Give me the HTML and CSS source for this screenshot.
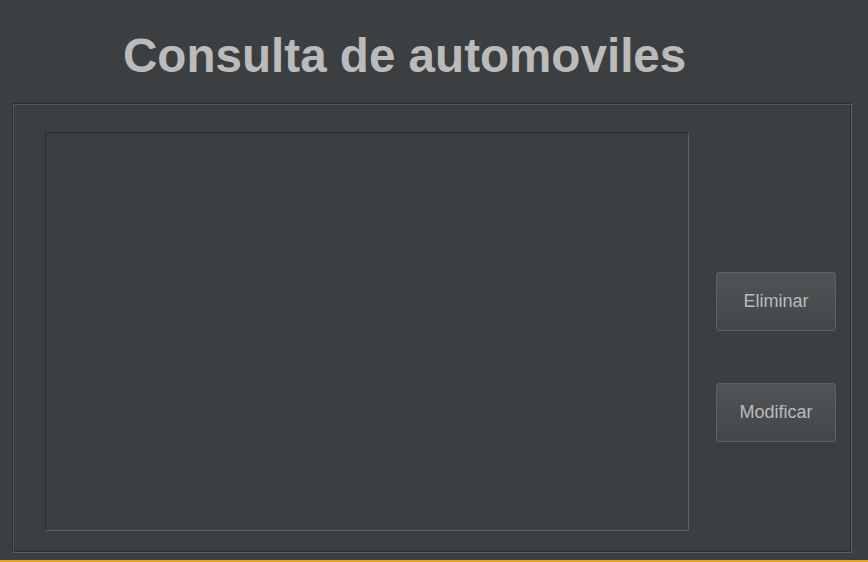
FILE: index.html
```html
<!DOCTYPE html>
<html lang="es">
<head>
<meta charset="utf-8">
<title>Consulta de automoviles</title>
<link rel="stylesheet" href="styles.css">
</head>
<body>
<div class="window">
  <header class="header">
    <h1 class="title">Consulta de automoviles</h1>
  </header>
  <section class="panel">
    <div class="list"></div>
    <div class="actions">
      <button class="btn" type="button">Eliminar</button>
      <button class="btn" type="button">Modificar</button>
    </div>
  </section>
  <div class="spacer"></div>
  <div class="accent"></div>
</div>
</body>
</html>
```
FILE: styles.css
```css
html, body {
  margin: 0;
  padding: 0;
  background: #3c3f41;
}
.window {
  width: 868px;
  height: 562px;
  display: flex;
  flex-direction: column;
  background: #3c3f41;
  font-family: "Liberation Sans", Arial, sans-serif;
}
.header {
  height: 103px;
  box-sizing: border-box;
  padding: 28px 0 0 123px;
}
.title {
  margin: 0;
  font-size: 47.6px;
  font-weight: bold;
  color: #bbbbbb;
  line-height: 55px;
  letter-spacing: 0;
}
.panel {
  margin: 0 16px 0 12px;
  height: 450px;
  box-sizing: border-box;
  border: 1px solid;
  border-color: #2b2d2e #5d6062 #5d6062 #2b2d2e;
  box-shadow: inset 1px 1px 0 #55585a, inset -1px -1px 0 #2b2d2e;
  padding: 28px 15px 0 32px;
  display: flex;
  align-items: flex-start;
}
.list {
  width: 644px;
  height: 399px;
  box-sizing: border-box;
  border: 1px solid;
  border-color: #2b2d2e #5d6062 #5d6062 #2b2d2e;
  background: #3b3e40;
  flex: none;
}
.actions {
  margin-left: 27px;
  padding-top: 140px;
  display: flex;
  flex-direction: column;
  gap: 52px;
}
.btn {
  width: 120px;
  height: 59px;
  box-sizing: border-box;
  border: 1px solid #5e6162;
  border-radius: 3px;
  background: linear-gradient(#505457, #43474a);
  color: #bbbbbb;
  font-family: "Liberation Sans", Arial, sans-serif;
  font-size: 18px;
  padding: 0;
}
.spacer {
  flex: 1;
}
.accent {
  height: 2px;
  background: #f0a30a;
}
```
